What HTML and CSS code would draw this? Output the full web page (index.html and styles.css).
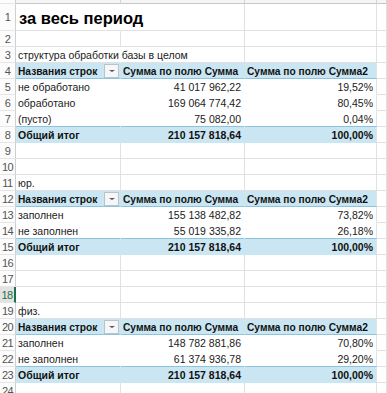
FILE: index.html
```html
<!DOCTYPE html>
<html lang="ru">
<head>
<meta charset="utf-8">
<title>Сводные таблицы</title>
<link rel="stylesheet" href="styles.css">
</head>
<body>
<div class="sheet">
  <div class="ch rh"></div><div class="ch"></div><div class="ch"></div><div class="ch"></div><div class="ch"></div>

  <div class="rh">1</div><div class="c spill title">за весь период</div><div class="c"></div><div class="c"></div><div class="c"></div>
  <div class="rh">2</div><div class="c"></div><div class="c"></div><div class="c"></div><div class="c"></div>
  <div class="rh">3</div><div class="c spill">структура обработки базы в целом</div><div class="c"></div><div class="c"></div><div class="c"></div>
  <div class="rh">4</div><div class="c pv hd a">Названия строк<span class="dd"></span></div><div class="c pv hd">Сумма по полю Сумма</div><div class="c pv hd last">Сумма по полю Сумма2</div><div class="c"></div>
  <div class="rh">5</div><div class="c pv">не обработано</div><div class="c pv num">41 017 962,22</div><div class="c pv num last">19,52%</div><div class="c"></div>
  <div class="rh">6</div><div class="c pv">обработано</div><div class="c pv num">169 064 774,42</div><div class="c pv num last">80,45%</div><div class="c"></div>
  <div class="rh">7</div><div class="c pv ed">(пусто)</div><div class="c pv num ed">75 082,00</div><div class="c pv num ed last">0,04%</div><div class="c"></div>
  <div class="rh">8</div><div class="c pv tot">Общий итог</div><div class="c pv tot num">210 157 818,64</div><div class="c pv tot num last">100,00%</div><div class="c"></div>
  <div class="rh">9</div><div class="c"></div><div class="c"></div><div class="c"></div><div class="c"></div>
  <div class="rh">10</div><div class="c"></div><div class="c"></div><div class="c"></div><div class="c"></div>
  <div class="rh">11</div><div class="c">юр.</div><div class="c"></div><div class="c"></div><div class="c"></div>
  <div class="rh">12</div><div class="c pv hd a">Названия строк<span class="dd"></span></div><div class="c pv hd">Сумма по полю Сумма</div><div class="c pv hd last">Сумма по полю Сумма2</div><div class="c"></div>
  <div class="rh">13</div><div class="c pv">заполнен</div><div class="c pv num">155 138 482,82</div><div class="c pv num last">73,82%</div><div class="c"></div>
  <div class="rh">14</div><div class="c pv ed">не заполнен</div><div class="c pv num ed">55 019 335,82</div><div class="c pv num ed last">26,18%</div><div class="c"></div>
  <div class="rh">15</div><div class="c pv tot">Общий итог</div><div class="c pv tot num">210 157 818,64</div><div class="c pv tot num last">100,00%</div><div class="c"></div>
  <div class="rh">16</div><div class="c"></div><div class="c"></div><div class="c"></div><div class="c"></div>
  <div class="rh">17</div><div class="c"></div><div class="c"></div><div class="c"></div><div class="c"></div>
  <div class="rh sel">18</div><div class="c"></div><div class="c"></div><div class="c"></div><div class="c"></div>
  <div class="rh">19</div><div class="c">физ.</div><div class="c"></div><div class="c"></div><div class="c"></div>
  <div class="rh">20</div><div class="c pv hd a">Названия строк<span class="dd"></span></div><div class="c pv hd">Сумма по полю Сумма</div><div class="c pv hd last">Сумма по полю Сумма2</div><div class="c"></div>
  <div class="rh">21</div><div class="c pv">заполнен</div><div class="c pv num">148 782 881,86</div><div class="c pv num last">70,80%</div><div class="c"></div>
  <div class="rh">22</div><div class="c pv ed">не заполнен</div><div class="c pv num ed">61 374 936,78</div><div class="c pv num ed last">29,20%</div><div class="c"></div>
  <div class="rh">23</div><div class="c pv tot">Общий итог</div><div class="c pv tot num">210 157 818,64</div><div class="c pv tot num last">100,00%</div><div class="c"></div>
  <div class="rh">24</div><div class="c"></div><div class="c"></div><div class="c"></div><div class="c"></div>
</div>
</body>
</html>
```
FILE: styles.css
```css
* { box-sizing: border-box; }
html, body { margin: 0; padding: 0; background: #ffffff; overflow: hidden; }
body { width: 387px; height: 393px; font-family: "Liberation Sans", Arial, sans-serif; font-size: 10.5px; color: #1a1a1a; }

.sheet {
  display: grid;
  grid-template-columns: 16px 105px 124px 132px 10px;
  grid-template-rows: 20px 27px repeat(23, 16px);
  margin-top: -16px;
  width: 387px;
}

.ch {
  background: #f5f5f5;
  border-right: 1px solid #d4d4d4;
  border-bottom: 1px solid #c8c8c8;
}

.rh {
  border-right: 1px solid #cfcfcf;
  border-bottom: 1px solid #e6e6e6;
  color: #555;
  font-size: 11px;
  display: flex;
  align-items: center;
  justify-content: center;
  letter-spacing: -0.5px;
  white-space: nowrap;
  overflow: hidden;
  background: #fcfcfc;
}
.rh.sel {
  color: #1e7145;
  background: #e3e3e3;
  border-right: 2px solid #1e7145;
}

.c {
  border-right: 1px solid #e1e1e1;
  border-bottom: 1px solid #e1e1e1;
  display: flex;
  align-items: center;
  padding: 1px 2px 0 2px;
  white-space: nowrap;
}
.c.spill { border-right-color: transparent; overflow: visible; position: relative; z-index: 1; }
.title { font-size: 16.5px; font-weight: bold; padding-left: 3px; padding-top: 2px; color: #000; }

.pv { border-right-color: transparent; border-bottom-color: transparent; background: #fff; }
.pv.last { border-right-color: #e1e1e1; }
.num { justify-content: flex-end; padding-right: 3px; }

.hd { background: #cbe6f3; font-weight: bold; font-size: 10.2px; border-bottom: 1px solid #8ec3e0; color: #111; }
.hd.a { justify-content: space-between; padding-right: 1px; }
.ed { border-bottom: 1px solid #8ec3e0; }
.tot { background: #cbe6f3; font-weight: bold; border-bottom-color: transparent; color: #111; }
.pv.hd.last, .pv.tot.last { border-right-color: #e1e1e1; }

.dd {
  width: 15px;
  height: 14px;
  border: 1px solid #b9c3c9;
  background: #f4f6f7;
  display: flex;
  align-items: center;
  justify-content: center;
}
.dd::after {
  content: "";
  width: 0;
  height: 0;
  border-left: 3px solid transparent;
  border-right: 3px solid transparent;
  border-top: 2px solid #555;
}
```
